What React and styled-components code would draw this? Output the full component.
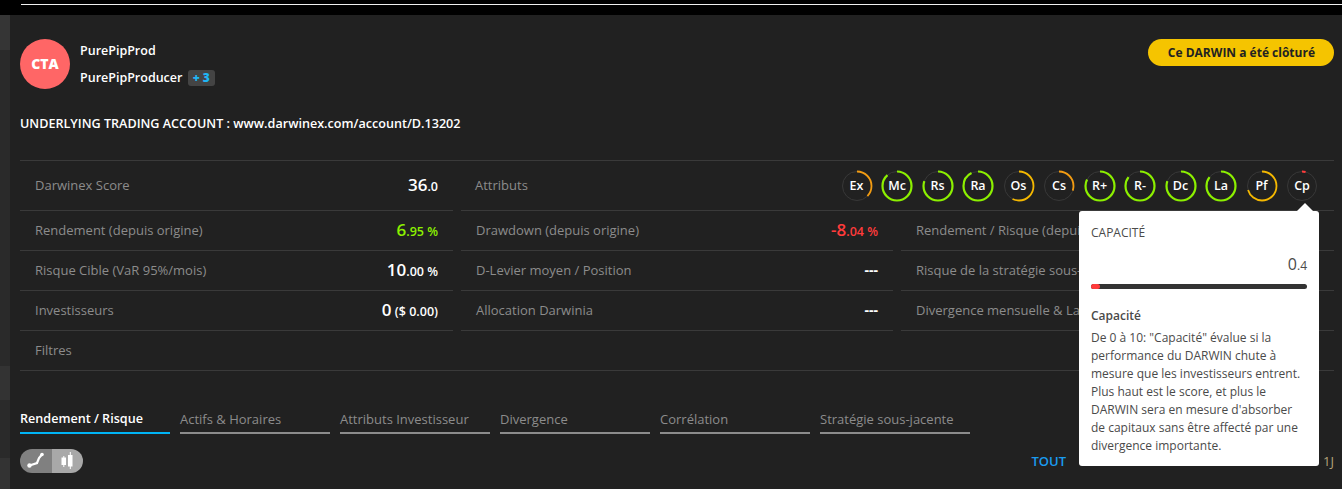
import styled, { createGlobalStyle } from "styled-components";

const GlobalStyle = createGlobalStyle`
  html, body {
    margin: 0;
    padding: 0;
    height: 489px;
    overflow: hidden;
    background: #000;
  }
`;

const rows = [
  [
    { label: "Rendement (depuis origine)", big: "6", small: ".95 %", color: "#8cf000" },
    { label: "Drawdown (depuis origine)", big: "-8", small: ".04 %", color: "#ff3b3b" },
    { label: "Rendement / Risque (depuis origine)" },
  ],
  [
    { label: "Risque Cible (VaR 95%/mois)", big: "10", small: ".00 %" },
    { label: "D-Levier moyen / Position", dashes: true },
    { label: "Risque de la stratégie sous-jacente" },
  ],
  [
    { label: "Investisseurs", big: "0", small: " ($ 0.00)" },
    { label: "Allocation Darwinia", dashes: true },
    { label: "Divergence mensuelle & Latence" },
  ],
];

const gauges = [
  { name: "Ex", value: 0.37, color: "#f39c12", width: 1.8 },
  { name: "Mc", value: 0.88, color: "#8cf000", width: 2.2 },
  { name: "Rs", value: 0.8, color: "#8cf000", width: 2.2 },
  { name: "Ra", value: 0.92, color: "#8cf000", width: 2.2 },
  { name: "Os", value: 0.57, color: "#f5b800", width: 1.8 },
  { name: "Cs", value: 0.3, color: "#f39c12", width: 1.8 },
  { name: "R+", value: 0.82, color: "#8cf000", width: 2.2 },
  { name: "R-", value: 0.85, color: "#8cf000", width: 2.2 },
  { name: "Dc", value: 0.8, color: "#8cf000", width: 2.2 },
  { name: "La", value: 0.85, color: "#8cf000", width: 2.2 },
  { name: "Pf", value: 0.7, color: "#f5b800", width: 1.8 },
  { name: "Cp", value: 0.04, color: "#ff3b3b", width: 2.2 },
];

const tabs = [
  "Rendement / Risque",
  "Actifs & Horaires",
  "Attributs Investisseur",
  "Divergence",
  "Corrélation",
  "Stratégie sous-jacente",
];

function Gauge({ name, value, color, width }) {
  const r = 14.5;
  const c = 2 * Math.PI * r;
  return (
    <GaugeBox>
      <GaugeSvg viewBox="0 0 32 32">
        <circle cx="16" cy="16" r={r} fill="none" stroke="#383838" strokeWidth="1" />
        <circle
          cx="16"
          cy="16"
          r={r}
          fill="none"
          stroke={color}
          strokeWidth={width}
          strokeDasharray={`${c * value} ${c}`}
          transform="rotate(-90 16 16)"
        />
      </GaugeSvg>
      <GaugeName>{name}</GaugeName>
    </GaugeBox>
  );
}

function Value({ big, small, color, dashes }) {
  if (dashes) return <Dashes>---</Dashes>;
  if (!big) return null;
  return (
    <ValueText $color={color}>
      {big}
      <Small>{small}</Small>
    </ValueText>
  );
}

export default function App() {
  return (
    <>
      <GlobalStyle />
      <Page>
        <TopBand>
          <TopLine />
        </TopBand>
        <Body>
          <Side>
            <SideBlock $h={35} $c="#353535" />
            <SideBlock $h={316} $c="#2a2a2a" />
            <SideBlock $h={34} $c="#333" />
            <SideBlock $h={58} $c="#2a2a2a" />
            <SideBlock $h={31} $c="#333" />
          </Side>
          <Main>
            <Header>
              <Avatar>CTA</Avatar>
              <Names>
                <Name>PurePipProd</Name>
                <Name>
                  PurePipProducer <Badge>+ 3</Badge>
                </Name>
              </Names>
              <ClosedPill>Ce DARWIN a été clôturé</ClosedPill>
            </Header>
            <Account>UNDERLYING TRADING ACCOUNT : www.darwinex.com/account/D.13202</Account>
            <Table>
              <TopRow>
                <Cell>
                  <Label>Darwinex Score</Label>
                  <ValueText>
                    36<Small>.0</Small>
                  </ValueText>
                </Cell>
                <WideCell>
                  <Label>Attributs</Label>
                  <Gauges>
                    {gauges.map((g) => (
                      <Gauge key={g.name} {...g} />
                    ))}
                  </Gauges>
                </WideCell>
              </TopRow>
              {rows.map((row, i) => (
                <Row key={i}>
                  {row.map((cell) => (
                    <Cell key={cell.label}>
                      <Label>{cell.label}</Label>
                      <Value {...cell} />
                    </Cell>
                  ))}
                </Row>
              ))}
              <FilterRow>
                <Label>Filtres</Label>
              </FilterRow>
            </Table>
            <Tabs>
              {tabs.map((t, i) => (
                <Tab key={t} $active={i === 0}>
                  {t}
                </Tab>
              ))}
            </Tabs>
            <Controls>
              <Switch>
                <SwitchPart $on>
                  <svg width="32" height="24" viewBox="0 0 32 24">
                    <path d="M9.5 16.5 L17 14 L19 9 L22 5.5" fill="none" stroke="#fff" strokeWidth="2.2" />
                    <circle cx="9.5" cy="16.5" r="2.2" fill="#fff" />
                    <circle cx="22" cy="5.5" r="1.8" fill="#fff" />
                  </svg>
                </SwitchPart>
                <SwitchPart>
                  <svg width="31" height="24" viewBox="0 0 31 24">
                    <rect x="9.5" y="8.5" width="4.5" height="7.5" fill="#fff" />
                    <rect x="11.3" y="7" width="1" height="11" fill="#fff" />
                    <rect x="16" y="6" width="4.5" height="11.5" fill="#fff" />
                    <rect x="17.8" y="3" width="1" height="17" fill="#fff" />
                  </svg>
                </SwitchPart>
              </Switch>
              <Range>TOUT</Range>
              <OneDay>1J</OneDay>
            </Controls>
          </Main>
        </Body>
        <Tooltip>
          <TipTitle>CAPACITÉ</TipTitle>
          <TipValue>
            0<TipSmall>.4</TipSmall>
          </TipValue>
          <Bar>
            <BarFill style={{ width: `${0.4 * 10}%` }} />
          </Bar>
          <TipHeading>Capacité</TipHeading>
          <TipText>
            De 0 à 10: "Capacité" évalue si la performance du DARWIN chute à mesure que les
            investisseurs entrent. Plus haut est le score, et plus le DARWIN sera en mesure
            d'absorber de capitaux sans être affecté par une divergence importante.
          </TipText>
        </Tooltip>
      </Page>
    </>
  );
}

const Page = styled.div`
  position: relative;
  width: 1342px;
  height: 489px;
  overflow: hidden;
  font-family: "Open Sans", sans-serif;
  font-size: 13px;
  color: #fff;
  background: #212121;
`;

const TopBand = styled.div`
  height: 15px;
  background: #000;
  padding: 4px 0 0 21px;
  box-sizing: border-box;
`;

const TopLine = styled.div`
  height: 1px;
  background: #f0f0f0;
`;

const Body = styled.div`
  display: flex;
  height: 474px;
`;

const Side = styled.div`
  width: 10px;
  flex: none;
  display: flex;
  flex-direction: column;
`;

const SideBlock = styled.div`
  height: ${(p) => p.$h}px;
  background: ${(p) => p.$c};
`;

const Main = styled.div`
  flex: 1;
  min-width: 0;
  padding: 0 8px 0 10px;
`;

const Header = styled.div`
  display: flex;
  align-items: center;
  padding-top: 24px;
`;

const Avatar = styled.div`
  width: 50px;
  height: 50px;
  flex: none;
  box-sizing: border-box;
  padding-bottom: 2px;
  border-radius: 50%;
  background: #ff6666;
  display: flex;
  align-items: center;
  justify-content: center;
  font-size: 14px;
  font-weight: 800;
`;

const Names = styled.div`
  flex: 1;
  margin: 1px 0 0 10px;
  display: flex;
  flex-direction: column;
  gap: 9px;
`;

const Name = styled.div`
  font-size: 12.5px;
  font-weight: 600;
  line-height: 18px;
`;

const Badge = styled.span`
  display: inline-block;
  margin-left: 2px;
  padding: 0 5px;
  height: 16px;
  line-height: 16px;
  border-radius: 3px;
  background: #444;
  color: #1fb5f5;
  font-size: 12px;
  font-weight: 800;
`;

const ClosedPill = styled.div`
  align-self: flex-start;
  height: 27px;
  padding: 0 19px 0 20px;
  border-radius: 14px;
  background: #f5c400;
  color: #222;
  font-size: 12px;
  font-weight: 700;
  line-height: 27px;
`;

const Account = styled.div`
  margin-top: 26px;
  font-size: 12.6px;
  font-weight: 600;
  line-height: 18px;
`;

const Table = styled.div`
  margin-top: 27px;
  border-top: 1px solid #3a3a3a;
`;

const TopRow = styled.div`
  display: grid;
  grid-template-columns: 433px 873px;
  column-gap: 8px;
`;

const Row = styled.div`
  display: grid;
  grid-template-columns: 433px 432px 433px;
  column-gap: 8px;
`;

const Cell = styled.div`
  display: flex;
  align-items: center;
  justify-content: space-between;
  box-sizing: border-box;
  height: 40px;
  padding: 0 15px 2px;
  border-bottom: 1px solid #3a3a3a;

  ${TopRow} & {
    height: 50px;
  }
`;

const WideCell = styled(Cell)`
  padding: 0 16px 2px 14px;
`;

const FilterRow = styled.div`
  display: flex;
  align-items: center;
  box-sizing: border-box;
  height: 40px;
  padding: 0 15px 2px;
  border-bottom: 1px solid #3a3a3a;
`;

const Label = styled.span`
  font-size: 13px;
  color: #8c8c8c;
  white-space: nowrap;
`;

const ValueText = styled.span`
  font-size: 17px;
  font-weight: 600;
  white-space: nowrap;
  color: ${(p) => p.$color || "#fff"};
`;

const Small = styled.span`
  font-size: 12.5px;
  font-weight: 600;
`;

const Dashes = styled.span`
  font-size: 14px;
  font-weight: 700;
`;

const Gauges = styled.div`
  display: flex;
  gap: 8.5px;
  margin-top: 2px;
`;

const GaugeBox = styled.div`
  position: relative;
  width: 32px;
  height: 32px;
  display: flex;
  align-items: center;
  justify-content: center;
`;

const GaugeSvg = styled.svg`
  position: absolute;
  inset: 0;
`;

const GaugeName = styled.span`
  position: relative;
  font-size: 12.5px;
  font-weight: 600;
`;

const Tabs = styled.div`
  display: flex;
  gap: 10px;
  margin-top: 35px;
`;

const Tab = styled.div`
  width: 150px;
  height: 28px;
  box-sizing: border-box;
  padding-top: 4px;
  border-bottom: 2px solid ${(p) => (p.$active ? "#00b4f5" : "#8c8c8c")};
  font-size: ${(p) => (p.$active ? "12.6px" : "13px")};
  line-height: 18px;
  font-weight: ${(p) => (p.$active ? 600 : 400)};
  color: ${(p) => (p.$active ? "#fff" : "#8c8c8c")};
  white-space: nowrap;
`;

const Controls = styled.div`
  display: flex;
  align-items: center;
  margin-top: 15px;
`;

const Switch = styled.div`
  display: flex;
  height: 24px;
  width: 63px;
  border-radius: 12px;
  overflow: hidden;
`;

const SwitchPart = styled.div`
  flex: ${(p) => (p.$on ? "0 0 32px" : 1)};
  display: flex;
  background: ${(p) => (p.$on ? "#808080" : "#a8a8a8")};
`;

const Range = styled.span`
  margin-left: auto;
  color: #1a9cf0;
  font-size: 13px;
  font-weight: 600;
`;

const OneDay = styled.span`
  margin-left: 257px;
  color: #b3a27a;
  font-size: 13px;
`;

const Tooltip = styled.div`
  position: absolute;
  left: 1079px;
  top: 211px;
  width: 240px;
  height: 255px;
  box-sizing: border-box;
  padding: 14px 12px 0;
  background: #fff;
  border-radius: 3px;
  color: #4a4a4a;

  &::before {
    content: "";
    position: absolute;
    right: 6px;
    top: -8px;
    border-left: 8px solid transparent;
    border-right: 8px solid transparent;
    border-bottom: 8px solid #fff;
  }
`;

const TipTitle = styled.div`
  font-size: 12px;
  line-height: 16px;
`;

const TipValue = styled.div`
  margin-top: 12px;
  text-align: right;
  font-size: 16px;
  line-height: 22px;
`;

const TipSmall = styled.span`
  font-size: 12px;
`;

const Bar = styled.div`
  margin-top: 7px;
  height: 5px;
  border-radius: 3px;
  background: #333;
`;

const BarFill = styled.div`
  height: 100%;
  border-radius: 3px;
  background: #ff3b3b;
`;

const TipHeading = styled.div`
  margin-top: 18px;
  font-size: 12px;
  font-weight: 600;
  line-height: 18px;
`;

const TipText = styled.div`
  margin-top: 4px;
  font-size: 12px;
  line-height: 18px;
`;
